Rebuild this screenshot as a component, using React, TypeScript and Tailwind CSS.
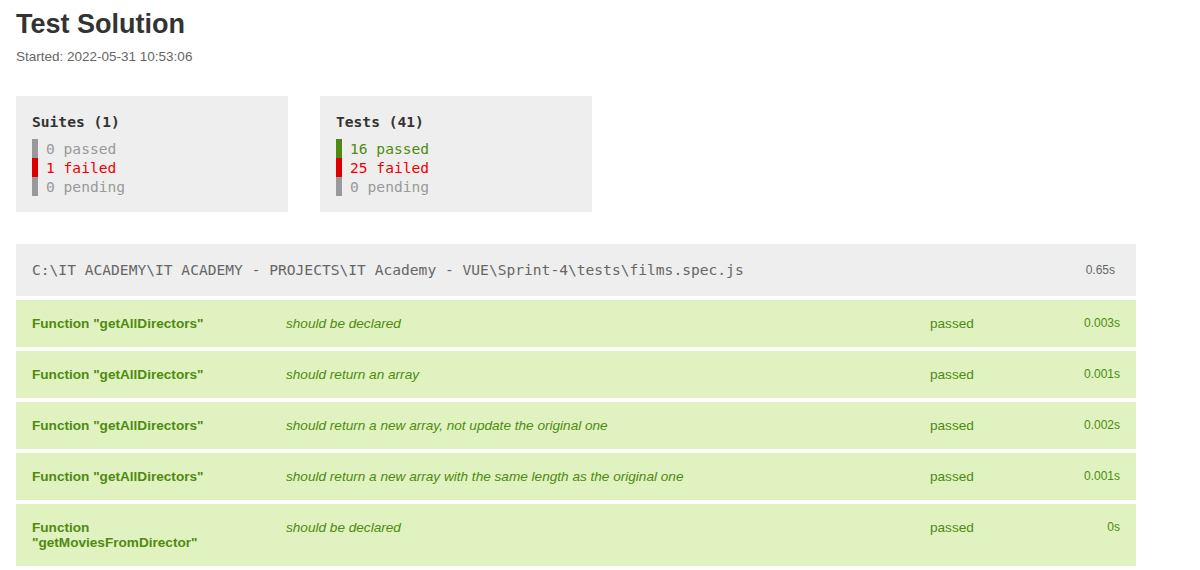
import React from "react";

const sans = { fontFamily: '"Liberation Sans", Arial, sans-serif' };
const mono = { fontFamily: '"DejaVu Sans Mono", "Liberation Mono", monospace' };

type Line = { label: string; bar: string; text: string };

const SummaryBox = ({ title, lines }: { title: string; lines: Line[] }) => (
  <div className="w-[272px] h-[116px] bg-[#eeeeee] p-4" style={mono}>
    <div className="text-[14.6px] leading-[19px] font-bold text-[#333]">{title}</div>
    <div className="mt-2 flex flex-col">
      {lines.map((l, i) => (
        <div key={i} className="flex items-stretch">
          <span className={`w-[6px] ${l.bar}`} />
          <span className={`ml-2 text-[14.6px] leading-[19px] ${l.text}`}>{l.label}</span>
        </div>
      ))}
    </div>
  </div>
);

const tests = [
  { name: 'Function "getAllDirectors"', desc: "should be declared", time: "0.003s" },
  { name: 'Function "getAllDirectors"', desc: "should return an array", time: "0.001s" },
  { name: 'Function "getAllDirectors"', desc: "should return a new array, not update the original one", time: "0.002s" },
  { name: 'Function "getAllDirectors"', desc: "should return a new array with the same length as the original one", time: "0.001s" },
  { name: 'Function "getMoviesFromDirector"', desc: "should be declared", time: "0s" },
];

export default function App() {
  return (
    <div className="w-[1200px] h-[570px] overflow-hidden bg-white px-4 pt-[11px]" style={sans}>
      <h1 className="text-[27px] leading-[27px] font-bold text-[#333]">Test Solution</h1>
      <p className="mt-[12px] text-[13.5px] leading-[14px] text-[#666]">Started: 2022-05-31 10:53:06</p>

      <div className="mt-[32px] flex gap-8">
        <SummaryBox
          title="Suites (1)"
          lines={[
            { label: "0 passed", bar: "bg-[#999]", text: "text-[#999]" },
            { label: "1 failed", bar: "bg-[#dd0000]", text: "text-[#ee0000]" },
            { label: "0 pending", bar: "bg-[#999]", text: "text-[#999]" },
          ]}
        />
        <SummaryBox
          title="Tests (41)"
          lines={[
            { label: "16 passed", bar: "bg-[#4f8a10]", text: "text-[#4f8a10]" },
            { label: "25 failed", bar: "bg-[#dd0000]", text: "text-[#ee0000]" },
            { label: "0 pending", bar: "bg-[#999]", text: "text-[#999]" },
          ]}
        />
      </div>

      <div className="mt-8 w-[1120px] flex flex-col gap-1">
        <div className="h-[52px] bg-[#eeeeee] flex items-center justify-between pl-4 pr-[21px]">
          <span className="text-[14.6px] text-[#666]" style={mono}>
            C:\IT ACADEMY\IT ACADEMY - PROJECTS\IT Academy - VUE\Sprint-4\tests\films.spec.js
          </span>
          <span className="text-[12px] text-[#666]">0.65s</span>
        </div>

        {tests.map((t, i) => (
          <div key={i} className="bg-[#dff2bf] px-4 py-4 flex items-start text-[#4f8a10] text-[13.6px] leading-[15px]">
            <div className="w-[254px] pr-[40px] font-bold">{t.name}</div>
            <div className="flex-1 italic">{t.desc}</div>
            <div className="w-[120px]">passed</div>
            <div className="w-[70px] text-right text-[12px]">{t.time}</div>
          </div>
        ))}
      </div>
    </div>
  );
}
